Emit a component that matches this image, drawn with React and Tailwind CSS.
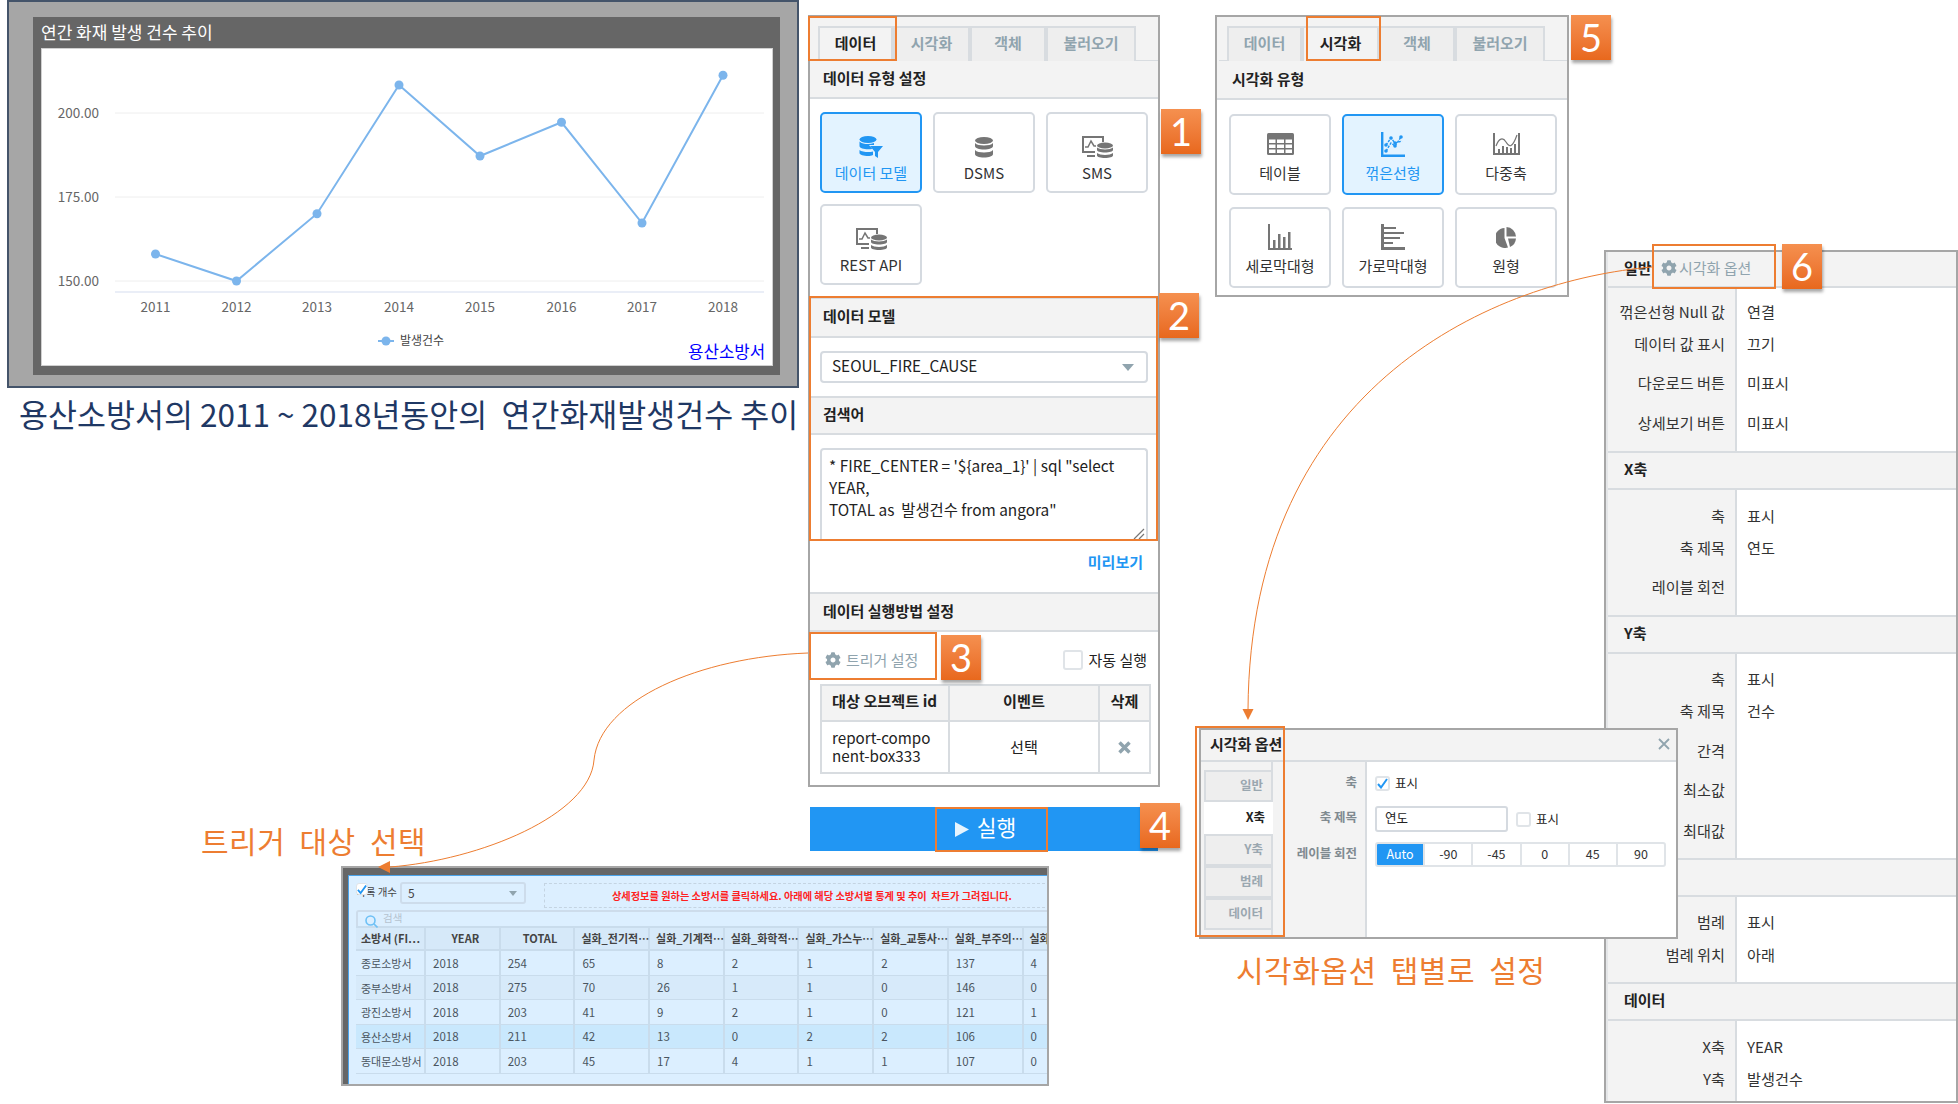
import { FaCog } from 'react-icons/fa';

const headerBg = 'bg-[#f3f3f3]';
const lineColor = 'border-[#d8dce0]';

const points = [
  [155.5, 254], [236.5, 281], [317, 213.7], [399, 85],
  [480, 156], [561.5, 122.3], [642, 223], [723, 75.3],
];
const years = ['2011', '2012', '2013', '2014', '2015', '2016', '2017', '2018'];

const fireRows = [
  ['종로소방서', '2018', '254', '65', '8', '2', '1', '2', '137', '4'],
  ['중부소방서', '2018', '275', '70', '26', '1', '1', '0', '146', '0'],
  ['광진소방서', '2018', '203', '41', '9', '2', '1', '0', '121', '1'],
  ['용산소방서', '2018', '211', '42', '13', '0', '2', '2', '106', '0'],
  ['동대문소방서', '2018', '203', '45', '17', '4', '1', '1', '107', '0'],
];
const fireCols = ['소방서 (FI⋯', 'YEAR', 'TOTAL', '실화_전기적⋯', '실화_기계적⋯', '실화_화학적⋯', '실화_가스누⋯', '실화_교통사⋯', '실화_부주의⋯', '실화'];

const optionSections = [
  {
    title: '일반', head: 'h-[36px] border-b-2', body: 'h-[163px]', pad: 'pt-[11px]',
    rows: [
      ['꺾은선형 Null 값', '연결', ''],
      ['데이터 값 표시', '끄기', 'mt-[8px]'],
      ['다운로드 버튼', '미표시', 'mt-[15px]'],
      ['상세보기 버튼', '미표시', 'mt-[16px]'],
    ],
  },
  {
    title: 'X축', head: 'h-[39px] border-y-2', body: 'h-[125px]', pad: 'pt-[13px]',
    rows: [
      ['축', '표시', ''],
      ['축 제목', '연도', 'mt-[8px]'],
      ['레이블 회전', '', 'mt-[15px]'],
    ],
  },
  {
    title: 'Y축', head: 'h-[39px] border-y-2', body: 'h-[204px]', pad: 'pt-[12px]',
    rows: [
      ['축', '표시', ''],
      ['축 제목', '건수', 'mt-[8px]'],
      ['간격', '', 'mt-[16px]'],
      ['최소값', '', 'mt-[15px]'],
      ['최대값', '', 'mt-[17px]'],
    ],
  },
  {
    title: '범례', head: 'h-[39px] border-y-2', body: 'h-[85px]', pad: 'pt-[12px]',
    rows: [
      ['범례', '표시', ''],
      ['범례 위치', '아래', 'mt-[9px]'],
    ],
  },
  {
    title: '데이터', head: 'h-[39px] border-y-2', body: 'h-[80px]', pad: 'pt-[13px]',
    rows: [
      ['X축', 'YEAR', ''],
      ['Y축', '발생건수', 'mt-[8px]'],
    ],
  },
];

function ModelIcon() {
  return (
    <svg width="24" height="22" viewBox="0 0 24 22" fill="currentColor">
      <ellipse cx="9" cy="3.5" rx="8.5" ry="3.5" />
      <path d="M.5 5.5C2 7.5 6 8 9 8c2 0 4-.3 6-1v2H10l3 3.5v.4c-1 .2-2.500.4-4 .4-4 0-8.500-1-8.500-3.300z" />
      <path d="M.5 14C2 15.500 6 16 9 16c2 0 3.500-.2 5-.6V19c-1.500.7-3 1-5 1-4 0-8.500-1-8.500-3z" />
      <path d="M11 10h13l-5 6v6l-3-2v-4z" />
    </svg>
  );
}

function DbIcon() {
  return (
    <svg width="18" height="21" viewBox="0 0 18 21" fill="currentColor">
      <ellipse cx="9" cy="3.5" rx="9" ry="3.5" />
      <path d="M0 6c1.500 1.800 5 2.500 9 2.500S16.500 7.800 18 6v3c0 2-4 3.500-9 3.500S0 11 0 9z" />
      <path d="M0 13c1.500 1.800 5 2.500 9 2.500s7.500-.7 9-2.500v4c0 2-4 3.500-9 3.500S0 19 0 17z" />
    </svg>
  );
}

function SmsIcon() {
  return (
    <svg width="31" height="22" viewBox="0 0 31 22" fill="none" stroke="currentColor" strokeWidth="2">
      <path d="M21 6V1H1v15h12M5 20h8" />
      <path d="M3 11h3l3-6 3 5h2" strokeWidth="1.500" />
      <g fill="currentColor" stroke="none">
        <ellipse cx="23" cy="9.500" rx="8" ry="3" />
        <path d="M15 11.500c1.500 1.300 4.500 2 8 2s6.500-.7 8-2v2.500c0 1.500-3.500 2.500-8 2.500s-8-1-8-2.500z" />
        <path d="M15 17c1.500 1.300 4.500 2 8 2s6.500-.7 8-2v2.500c0 1.500-3.500 2.500-8 2.500s-8-1-8-2.500z" />
      </g>
    </svg>
  );
}

function TableIcon() {
  return (
    <svg width="27" height="22" viewBox="0 0 27 22" fill="currentColor">
      <rect width="27" height="22" rx="1.500" />
      <g fill="#fff">
        <rect x="2" y="6.500" width="6.500" height="3.500" />
        <rect x="10" y="6.500" width="7" height="3.500" />
        <rect x="18.500" y="6.500" width="6.500" height="3.500" />
        <rect x="2" y="11.500" width="6.500" height="3.500" />
        <rect x="10" y="11.500" width="7" height="3.500" />
        <rect x="18.500" y="11.500" width="6.500" height="3.500" />
        <rect x="2" y="16.500" width="6.500" height="3.500" />
        <rect x="10" y="16.500" width="7" height="3.500" />
        <rect x="18.500" y="16.500" width="6.500" height="3.500" />
      </g>
    </svg>
  );
}

function LineIcon() {
  return (
    <svg width="24" height="25" viewBox="0 0 24 25" fill="none" stroke="currentColor">
      <path d="M1.200 0v23.800H24" strokeWidth="2.400" />
      <path d="M5 19l5-8 4 3 6-9" strokeWidth="1.400" strokeDasharray="2.500 1.200" />
      <path d="M5 13l5-7 4 5 7-2" strokeWidth="1.400" strokeDasharray="2.500 1.200" />
      <g fill="currentColor" stroke="none">
        <circle cx="5" cy="13" r="1.800" />
        <circle cx="10" cy="6" r="1.800" />
        <circle cx="14" cy="11" r="1.800" />
        <circle cx="20" cy="5" r="1.800" />
        <circle cx="5" cy="19" r="1.800" />
        <circle cx="14" cy="14" r="1.800" />
      </g>
    </svg>
  );
}

function MultiIcon() {
  return (
    <svg width="27" height="22" viewBox="0 0 27 22" fill="none" stroke="currentColor">
      <path d="M1 0v21h25V0" strokeWidth="2" />
      <path d="M3 13c3-8 7-9 10-4s6 7 11-7" strokeWidth="1.200" />
      <g fill="currentColor" stroke="none">
        <rect x="5" y="16" width="2" height="5" />
        <rect x="9" y="13" width="2" height="8" />
        <rect x="13" y="14" width="2" height="7" />
        <rect x="17" y="15" width="2" height="6" />
        <rect x="21" y="11" width="2" height="10" />
      </g>
    </svg>
  );
}

function BarIcon() {
  return (
    <svg width="24" height="26" viewBox="0 0 24 26" fill="currentColor">
      <path d="M0 0h2v24h22v2H0z" />
      <rect x="5" y="16" width="2.500" height="8" />
      <rect x="10" y="10" width="2.500" height="14" />
      <rect x="15" y="13" width="2.500" height="11" />
      <rect x="20" y="8" width="2.500" height="16" />
    </svg>
  );
}

function HBarIcon() {
  return (
    <svg width="24" height="26" viewBox="0 0 24 26" fill="currentColor">
      <path d="M0 0h3v23h21v3H0z" />
      <rect x="3" y="3" width="12" height="2" />
      <rect x="3" y="8" width="20" height="2" />
      <rect x="3" y="13" width="16" height="2" />
      <rect x="3" y="18" width="9" height="2" />
    </svg>
  );
}

function PieIcon() {
  return (
    <svg width="20" height="21" viewBox="0 0 20 21" fill="currentColor">
      <path d="M8.500 1A10 10 0 1 0 12 20.500L8.500 11z" />
      <path d="M10.500 0A10 10 0 0 1 20 9.500h-9.500z" />
      <path d="M20 11.500a10 10 0 0 1-6 8.500l-2-8.500z" />
    </svg>
  );
}

function Badge({ n, className }) {
  return (
    <div className={`absolute z-30 w-[40px] h-[45px] flex items-center justify-center bg-gradient-to-b from-[#f5904f] to-[#e8681c] text-white text-[38px] font-['Lato',sans-serif] shadow-[1px_3px_3px_rgba(0,0,0,0.35)] ${className}`}>
      {n}
    </div>
  );
}

function OrangeBox({ className }) {
  return <div className={`absolute z-20 border-2 border-[#ed7d31] ${className}`} />;
}

function Tabs({ active }) {
  const tabs = [
    ['데이터', 'w-[75px]'],
    ['시각화', 'w-[77px]'],
    ['객체', 'w-[76px]'],
    ['불러오기', 'w-[90px]'],
  ];
  return (
    <div className={`h-[44px] pl-[8px] pt-[9px] flex items-end ${headerBg} border-b ${lineColor}`}>
      {tabs.map(([name, w]) => (
        <div
          key={name}
          className={`${w} h-[35px] -mb-px pb-[3px] flex items-center justify-center text-[15px] font-bold border-2 border-b-0 ${lineColor} ${name === active ? 'bg-[#f3f3f3] text-[#222]' : 'bg-[#eeeeee] text-[#90a4ae]'}`}
        >
          {name}
        </div>
      ))}
    </div>
  );
}

function SectionHead({ children, className }) {
  return (
    <div className={`${headerBg} ${lineColor} flex items-center pl-[13px] pb-[2px] text-[15px] font-bold text-[#222] ${className}`}>
      {children}
    </div>
  );
}

function TypeButton({ icon, label, active, compact }) {
  return (
    <div className={`w-[102px] h-[81px] rounded-[5px] border-2 flex flex-col items-center ${active ? 'border-[#2196f3] bg-[#e3f3ff] text-[#2196f3]' : 'border-[#d5dae0] bg-white text-[#333]'}`}>
      <div className={`h-[24px] flex items-center justify-center ${compact ? 'mt-[16px]' : 'mt-[21px]'} ${active ? 'text-[#2196f3]' : 'text-[#757575]'}`}>{icon}</div>
      <div className={`text-[15px] leading-[24px] ${compact ? 'mt-[5px]' : 'mt-[2px]'}`}>{label}</div>
    </div>
  );
}

function CheckBox({ checked, className }) {
  return (
    <div className={`rounded-[3px] border-2 border-[#e0e4e8] bg-white flex items-center justify-center ${className}`}>
      {checked && (
        <svg width="11" height="11" viewBox="0 0 11 11" fill="none" stroke="#2196f3" strokeWidth="2">
          <path d="M1 6l3 3.500L10 1" />
        </svg>
      )}
    </div>
  );
}

function ChartPanel() {
  return (
    <div className="absolute left-[7px] top-0 w-[792px] h-[388px] border-2 border-[#44546a] bg-[#a6a6a6] pl-[24px] pt-[15px]">
      <div className="w-[747px] h-[358px] bg-[#666666] pl-[8px]">
        <div className="h-[31px] pb-[2px] flex items-center text-[17px] text-white">연간 화재 발생 건수 추이</div>
        <div className="w-[732px] h-[318px] bg-white border border-[#d0d0d0]">
          <svg width="730" height="316" viewBox="42 49 730 316">
            {[113, 197, 281].map((y) => (
              <line key={y} x1="115" x2="764" y1={y} y2={y} stroke="#eeeeee" strokeWidth="1" />
            ))}
            <line x1="115" x2="764" y1="292" y2="292" stroke="#e3e9f5" strokeWidth="1.500" />
            {[['200.00', 113], ['175.00', 197], ['150.00', 281]].map(([t, y]) => (
              <text key={t} x="99" y={y + 5} textAnchor="end" fontSize="13.500" fill="#666666">{t}</text>
            ))}
            {years.map((t, i) => (
              <text key={t} x={points[i][0]} y="312" textAnchor="middle" fontSize="13.500" fill="#666666">{t}</text>
            ))}
            <polyline points={points.map((p) => p.join(',')).join(' ')} fill="none" stroke="#7cb5ec" strokeWidth="2" />
            {points.map(([x, y]) => (
              <circle key={x} cx={x} cy={y} r="4.500" fill="#7cb5ec" />
            ))}
            <line x1="378" x2="394" y1="341" y2="341" stroke="#7cb5ec" strokeWidth="2" />
            <circle cx="386" cy="341" r="4.500" fill="#7cb5ec" />
            <text x="400" y="345" fontSize="12" fill="#444444">발생건수</text>
            <text x="688" y="358" fontSize="16.800" fill="#0000ff">용산소방서</text>
          </svg>
        </div>
      </div>
    </div>
  );
}

function DataPanel() {
  return (
    <div className="absolute left-[808px] top-[15px] w-[352px] h-[772px] border-2 border-[#a6a6a6] bg-white flex flex-col">
      <Tabs active="데이터" />
      <SectionHead className="h-[38px] border-b-2">데이터 유형 설정</SectionHead>
      <div className="h-[198px] pl-[10px] pt-[13px]">
        <div className="grid grid-cols-[102px_102px_102px] gap-x-[11px] gap-y-[11px]">
          <TypeButton icon={<ModelIcon />} label="데이터 모델" active />
          <TypeButton icon={<DbIcon />} label="DSMS" />
          <TypeButton icon={<SmsIcon />} label="SMS" />
          <TypeButton icon={<SmsIcon />} label="REST API" />
        </div>
      </div>
      <SectionHead className="h-[41px] border-y-2">데이터 모델</SectionHead>
      <div className="h-[58px] pl-[10px] pt-[13px]">
        <div className="w-[328px] h-[32px] rounded-[4px] border-2 border-[#d5dae0] flex items-center justify-between pl-[10px] pr-[12px] pb-[3px] text-[15.300px] text-[#222]">
          SEOUL_FIRE_CAUSE
          <svg className="mt-[3px]" width="12" height="7" viewBox="0 0 12 7"><path d="M0 0h12L6 7z" fill="#90a4ae" /></svg>
        </div>
      </div>
      <SectionHead className="h-[39px] border-y-2">검색어</SectionHead>
      <div className="h-[157px] pl-[10px] pt-[13px] relative">
        <div className="relative w-[328px] h-[93px] rounded-t-[4px] border-2 border-b-0 border-[#d5dae0] pl-[7px] pt-[4px] text-[15.400px] leading-[22px] text-[#222] whitespace-pre">
          {"* FIRE_CENTER = '${area_1}' | sql \"select\nYEAR,\nTOTAL as  발생건수 from angora\""}
          <svg className="absolute right-[1px] bottom-[1px]" width="12" height="12" viewBox="0 0 12 12" stroke="#777777" strokeWidth="1.200">
            <path d="M1 11L11 1M6 11l5-5" />
          </svg>
        </div>
        <div className="mt-[10px] pr-[15px] text-right text-[15px] font-bold text-[#2196f3]">미리보기</div>
      </div>
      <SectionHead className="h-[40px] border-y-2">데이터 실행방법 설정</SectionHead>
      <div className="h-[52px] flex items-center justify-between pl-[15px] pr-[11px] pt-[4px]">
        <div className="flex items-center text-[15px] text-[#90a4ae]">
          <FaCog className="w-[16px] h-[16px] mr-[5px]" />
          트리거 설정
        </div>
        <div className="flex items-center text-[15px] text-[#222]">
          <CheckBox className="w-[20px] h-[20px] mr-[5px]" />
          자동 실행
        </div>
      </div>
      <div className="ml-[10px] w-[331px] h-[90px] border-2 border-[#d8dce0] text-[15.200px] text-[#222]">
        <div className={`h-[36px] flex font-bold ${headerBg} border-b-2 border-[#d8dce0]`}>
          <div className="w-[128px] flex items-center pl-[10px] pb-[5px] border-r-2 border-[#d8dce0]">대상 오브젝트 id</div>
          <div className="w-[150px] flex items-center justify-center pb-[5px] border-r-2 border-[#d8dce0]">이벤트</div>
          <div className="flex-1 flex items-center justify-center pb-[5px]">삭제</div>
        </div>
        <div className="h-[50px] flex">
          <div className="w-[128px] flex items-center pl-[10px] pb-[2px] leading-[18px] border-r-2 border-[#d8dce0]">
            <span>report-compo<br />nent-box333</span>
          </div>
          <div className="w-[150px] flex items-center justify-center pb-[2px] border-r-2 border-[#d8dce0]">선택</div>
          <div className="flex-1 flex items-center justify-center">
            <svg width="13" height="13" viewBox="0 0 13 13" stroke="#90a4ae" strokeWidth="3.500"><path d="M1.500 1.500l10 10M11.500 1.500l-10 10" /></svg>
          </div>
        </div>
      </div>
    </div>
  );
}

function RunButton() {
  return (
    <div className="absolute left-[810px] top-[807px] w-[348px] h-[44px] bg-[#2196f3] flex items-center justify-center pl-[3px] pb-[3px] text-white text-[21.500px]">
      <svg className="mr-[8px] mt-[3px]" width="14" height="15" viewBox="0 0 14 15"><path d="M0 0l14 7.500L0 15z" fill="#e6f4fe" /></svg>
      실행
    </div>
  );
}

function VizPanel() {
  return (
    <div className="absolute left-[1215px] top-[15px] w-[354px] h-[282px] border-2 border-[#a6a6a6] bg-white flex flex-col">
      <div className={`pl-[2px] ${headerBg}`}><Tabs active="시각화" /></div>
      <SectionHead className="h-[39px] border-b-2 !pl-[15px] !pb-0">시각화 유형</SectionHead>
      <div className="pl-[12px] pt-[14px]">
        <div className="grid grid-cols-[102px_102px_102px] gap-x-[11px] gap-y-[12px]">
          <TypeButton compact icon={<TableIcon />} label="테이블" />
          <TypeButton compact icon={<LineIcon />} label="꺾은선형" active />
          <TypeButton compact icon={<MultiIcon />} label="다중축" />
          <TypeButton compact icon={<BarIcon />} label="세로막대형" />
          <TypeButton compact icon={<HBarIcon />} label="가로막대형" />
          <TypeButton compact icon={<PieIcon />} label="원형" />
        </div>
      </div>
    </div>
  );
}

function OptionsPanel() {
  return (
    <div className="absolute left-[1604px] top-[250px] w-[354px] h-[853px] border-2 border-[#a6a6a6] bg-white">
      <div className="h-full border-l-2 border-[#e4e6e8] overflow-hidden">
        {optionSections.map((s) => (
          <div key={s.title}>
            <div className={`${s.head} ${headerBg} ${lineColor} flex items-center pl-[16px] pb-[2px] text-[15px] font-bold text-[#222]`}>{s.title}</div>
            <div className={`${s.body} flex text-[15.200px] text-[#333]`}>
              <div className={`w-[129px] ${s.pad} bg-[#f3f3f3] border-r-2 border-[#d8dce0] pr-[10px] text-right`}>
                {s.rows.map(([label, , gap]) => (
                  <div key={label} className={`h-[24px] leading-[24px] ${gap}`}>{label}</div>
                ))}
              </div>
              <div className={`flex-1 ${s.pad} pl-[10px]`}>
                {s.rows.map(([label, value, gap]) => (
                  <div key={label} className={`h-[24px] leading-[24px] ${gap}`}>{value}</div>
                ))}
              </div>
            </div>
          </div>
        ))}
      </div>
    </div>
  );
}

function OptionsModal() {
  const tabs = ['일반', 'X축', 'Y축', '범례', '데이터'];
  const angles = ['Auto', '-90', '-45', '0', '45', '90'];
  return (
    <div className="absolute z-10 left-[1199px] top-[728px] w-[479px] h-[211px] border-2 border-[#a6a6a6] bg-white flex flex-col">
      <div className={`h-[32px] shrink-0 ${headerBg} border-b-2 ${lineColor} flex items-center justify-between pl-[9px] pr-[6px] pb-[2px] text-[15px] font-bold text-[#222]`}>
        시각화 옵션
        <svg width="12" height="12" viewBox="0 0 12 12" stroke="#90a4ae" strokeWidth="1.800"><path d="M1 1l10 10M11 1L1 11" /></svg>
      </div>
      <div className="flex-1 flex min-h-0">
        <div className={`w-[166px] flex ${headerBg} border-r-2 ${lineColor}`}>
          <div className={`w-[72px] pl-[3px] pt-[8px] border-r-2 ${lineColor}`}>
            {tabs.map((t) => (
              <div
                key={t}
                className={`h-[32px] w-[69px] flex items-center justify-end pr-[8px] pb-[2px] text-[12.500px] font-bold ${t === 'X축' ? 'bg-white text-[#222]' : `bg-[#eeeeee] text-[#9aa7b0] border-2 ${lineColor}`}`}
              >
                {t}
              </div>
            ))}
          </div>
          <div className="flex-1 pr-[8px] pt-[8px] text-right text-[12.500px] font-bold text-[#808a90]">
            <div className="h-[24px] leading-[24px]">축</div>
            <div className="h-[24px] leading-[24px] mt-[11px]">축 제목</div>
            <div className="h-[24px] leading-[24px] mt-[12px]">레이블 회전</div>
          </div>
        </div>
        <div className="flex-1 pl-[8px] pt-[13px] text-[12.500px] text-[#222]">
          <div className="h-[16px] flex items-center">
            <CheckBox checked className="w-[15px] h-[15px] mr-[5px]" />
            표시
          </div>
          <div className="mt-[15px] flex items-center">
            <div className="w-[133px] h-[26px] rounded-[3px] border-2 border-[#d5dae0] flex items-center pl-[8px] pb-[2px]">연도</div>
            <CheckBox className="w-[15px] h-[15px] ml-[8px] mr-[5px]" />
            표시
          </div>
          <div className="mt-[10px] w-[291px] h-[25px] flex rounded-[3px] border-2 border-[#e0e4e8] overflow-hidden">
            {angles.map((a) => (
              <div
                key={a}
                className={`flex-1 flex items-center justify-center border-r-2 border-[#e0e4e8] last:border-r-0 ${a === 'Auto' ? 'bg-[#2196f3] text-white' : 'text-[#333]'}`}
              >
                {a}
              </div>
            ))}
          </div>
        </div>
      </div>
    </div>
  );
}

function FireTable() {
  return (
    <div className="absolute left-[341px] top-[866px] w-[708px] h-[220px] border-2 border-[#a6a6a6] bg-[#666666] pl-[5px] pt-[7px] overflow-hidden">
      <div className="w-[702px] h-[211px] bg-[#dcefff] border-l border-t border-[#4aa3ea] pl-[7px] pt-[7px]">
        <div className="flex items-start h-[27px] text-[10.500px] text-[#444]">
          <div className="relative w-[44px] h-[18px] flex items-center whitespace-nowrap">
            <span>목록 개수</span>
            <CheckBox checked className="absolute left-0 top-0 w-[12px] h-[12px] !border" />
          </div>
          <div className="w-[126px] h-[22px] -mt-[1px] rounded-[3px] border-2 border-[#cddceb] flex items-center justify-between pl-[6px] pr-[7px] text-[12px]">
            5
            <svg width="8" height="5" viewBox="0 0 8 5"><path d="M0 0h8L4 5z" fill="#90a4ae" /></svg>
          </div>
          <div className="ml-[18px] flex-1 h-[25px] border border-dashed border-[#c4d4e2] border-r-0 flex items-center pl-[67px] text-[10.200px] font-bold text-[#ff1f1f] whitespace-pre">
            {'상세정보를 원하는 소방서를 클릭하세요. 아래에 해당 소방서별 통계 및 추이  차트가 그려집니다.'}
          </div>
        </div>
        <div className="h-[16px] border-2 border-b-0 border-[#cddceb] rounded-t-[3px] flex pl-[7px] text-[10.500px] text-[#b5c3cf] leading-[12px]">
          <svg className="mt-[3px] mr-[5px] shrink-0" width="13" height="13" viewBox="0 0 13 13" fill="none" stroke="#6ec0f5" strokeWidth="1.600">
            <circle cx="5.500" cy="5.500" r="4.500" /><path d="M9 9l3.500 3.500" />
          </svg>
          검색
        </div>
        <div className="flex h-[25px] bg-[#d6e9f9] border-y-2 border-[#c9dcec] text-[11px] font-bold text-[#444] whitespace-nowrap">
          {fireCols.map((c, i) => (
            <div key={c} className={`shrink-0 h-full flex items-center border-r-2 border-[#c9dcec] ${i === 0 ? 'w-[70px] pl-[5px]' : 'w-[74.700px] pl-[6px]'} ${i === 1 || i === 2 ? 'justify-center pl-0' : ''}`}>
              {c}
            </div>
          ))}
        </div>
        {fireRows.map((row, r) => (
          <div
            key={row[0]}
            className={`flex h-[24.600px] border-b border-[#c9dcec] text-[11.500px] text-[#4a5560] whitespace-nowrap ${r === 3 ? 'bg-[#c9e8fd]' : r === 1 ? 'bg-[#d7eafa]' : ''}`}
          >
            {row.map((cell, i) => (
              <div key={i} className={`shrink-0 h-full flex items-center pt-[1px] border-r-2 border-[#c9dcec] ${i === 0 ? 'w-[70px] pl-[5px] text-[11px]' : 'w-[74.700px] pl-[7px]'}`}>
                {cell}
              </div>
            ))}
          </div>
        ))}
      </div>
    </div>
  );
}

function Connectors() {
  return (
    <svg className="absolute inset-0 z-20 pointer-events-none" width="1958" height="1104" viewBox="0 0 1958 1104" fill="none">
      <path d="M808 653C700 657 600 700 594 760C590 815 480 860 390 867" stroke="#ed7d31" strokeWidth="1" />
      <path d="M378 867L390 861V873z" fill="#ed7d31" />
      <path d="M1652 267C1500 280 1250 380 1248 710" stroke="#ed7d31" strokeWidth="1" />
      <path d="M1248 720L1242.500 709H1253.500z" fill="#ed7d31" />
    </svg>
  );
}

export default function App() {
  return (
    <div className="relative w-[1958px] h-[1104px] overflow-hidden bg-white font-['Noto_Sans_CJK_KR',sans-serif]">
      <ChartPanel />
      <div className="absolute left-[19px] top-[391px] text-[31.500px] leading-[44px] text-[#1f3864] whitespace-pre">
        {'용산소방서의 2011 ~ 2018년동안의  연간화재발생건수 추이'}
      </div>
      <DataPanel />
      <RunButton />
      <VizPanel />
      <OptionsPanel />
      <OptionsModal />
      <FireTable />

      <div className="absolute z-20 left-[201px] top-[818px] text-[30px] leading-[44px] tracking-[0.5px] [word-spacing:7px] text-[#ed7d31] whitespace-pre">트리거 대상 선택</div>
      <div className="absolute z-20 left-[1236px] top-[947px] text-[30px] leading-[44px] tracking-[0.5px] [word-spacing:7px] text-[#ed7d31] whitespace-pre">시각화옵션 탭별로 설정</div>

      {/* 시각화 옵션 callout over the option panel */}
      <div className="absolute z-10 left-[1652px] top-[252px] w-[124px] h-[34px] bg-[#f3f3f3] flex items-center pl-[9px] pb-[2px] text-[15px] text-[#90a4ae]">
        <FaCog className="w-[16px] h-[16px] mr-[2px]" />
        시각화 옵션
      </div>

      <Connectors />

      <OrangeBox className="left-[808px] top-[16px] w-[89px] h-[45px]" />
      <OrangeBox className="left-[809px] top-[296px] w-[349px] h-[245px]" />
      <OrangeBox className="left-[809px] top-[632px] w-[128px] h-[48px]" />
      <OrangeBox className="left-[935px] top-[807px] w-[113px] h-[45px]" />
      <OrangeBox className="left-[1306px] top-[16px] w-[75px] h-[45px]" />
      <OrangeBox className="left-[1652px] top-[244px] w-[124px] h-[45px]" />
      <OrangeBox className="left-[1195px] top-[726px] w-[90px] h-[211px]" />

      <Badge n="1" className="left-[1161px] top-[109px]" />
      <Badge n="2" className="left-[1159px] top-[293px]" />
      <Badge n="3" className="left-[941px] top-[635px]" />
      <Badge n="4" className="left-[1140px] top-[803px]" />
      <Badge n="5" className="left-[1571px] top-[15px]" />
      <Badge n="6" className="left-[1782px] top-[244px]" />
    </div>
  );
}
